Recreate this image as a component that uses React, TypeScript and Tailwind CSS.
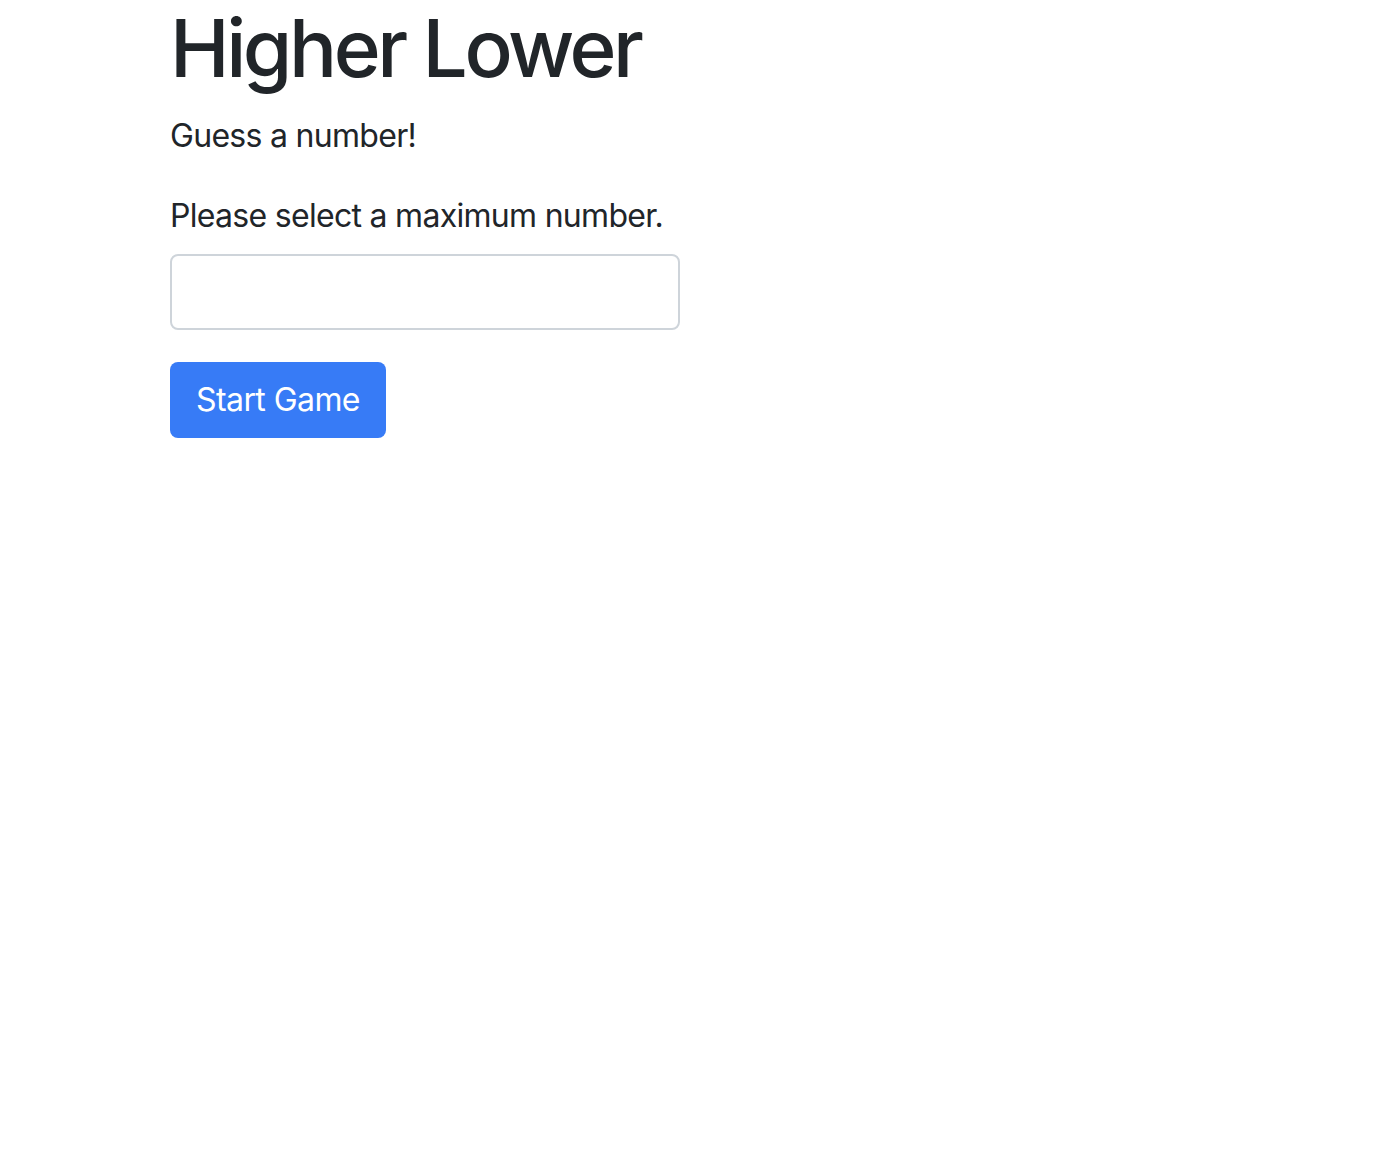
import React from "react";

export default function App() {
  return (
    <div className="min-h-screen bg-white text-[#212529]" style={{ fontFamily: "Inter, 'Noto Sans', sans-serif" }}>
      <div className="mx-auto max-w-[1080px] px-[19px]">
        <h1 className="m-0 text-[80px] leading-[96px] font-medium tracking-[-0.043em] mb-[16px]">Higher Lower</h1>
        <p className="text-[32px] leading-[48px] tracking-[-0.022em] mb-[32px]">Guess a number!</p>
        <p className="text-[32px] leading-[48px] tracking-[-0.022em] mb-[14px]">Please select a maximum number.</p>
        <input
          type="text"
          className="block w-[510px] h-[76px] rounded-[8px] border-2 border-[#ced4da] bg-white px-[24px] text-[32px] outline-none"
        />
        <button className="mt-[32px] h-[76px] rounded-[8px] bg-[#377bf6] px-[26px] text-[32px] leading-[48px] tracking-[-0.018em] text-white">
          Start Game
        </button>
      </div>
    </div>
  );
}
